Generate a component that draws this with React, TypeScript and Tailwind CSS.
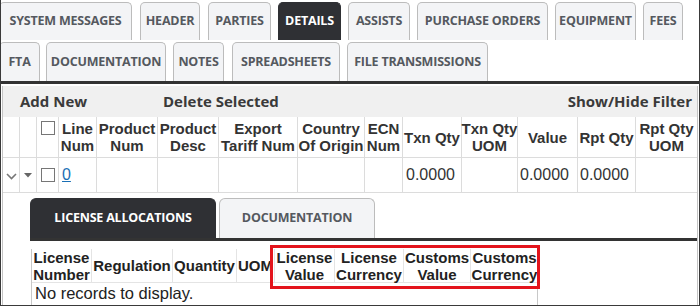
const tabBase =
  "h-full shrink-0 rounded-t-[5px] border border-b-0 flex items-center justify-center font-['Open_Sans',sans-serif] font-bold text-[12.5px] tracking-[-0.2px]";
const tabLight = 'border-[#bcbcbc] bg-[#f3f4f6] text-[#55595f]';
const tabDark = 'border-[#2f3034] bg-[#2f3034] text-white';

const rowOne = [
  { label: 'SYSTEM MESSAGES', cls: 'w-[133px] ml-[-2px]' },
  { label: 'HEADER', cls: 'w-[60px] ml-[8px]' },
  { label: 'PARTIES', cls: 'w-[63px] ml-[8px]' },
  { label: 'DETAILS', cls: 'w-[63px] ml-[7px]', active: true },
  { label: 'ASSISTS', cls: 'w-[62px] ml-[7px]' },
  { label: 'PURCHASE ORDERS', cls: 'w-[131px] ml-[7px]' },
  { label: 'EQUIPMENT', cls: 'w-[81px] ml-[7px]' },
  { label: 'FEES', cls: 'w-[40px] ml-[7px]' },
];

const rowTwo = [
  { label: 'FTA', cls: 'w-[41px] ml-[-2px]' },
  { label: 'DOCUMENTATION', cls: 'w-[120px] ml-[6px]' },
  { label: 'NOTES', cls: 'w-[51px] ml-[7px]' },
  { label: 'SPREADSHEETS', cls: 'w-[108px] ml-[8px]' },
  { label: 'FILE TRANSMISSIONS', cls: 'w-[141px] ml-[7px]' },
];

const headers: string[][] = [
  [],
  [],
  [],
  ['Line', 'Num'],
  ['Product', 'Num'],
  ['Product', 'Desc'],
  ['Export', 'Tariff Num'],
  ['Country', 'Of Origin'],
  ['ECN', 'Num'],
  ['Txn Qty'],
  ['Txn Qty', 'UOM'],
  ['Value'],
  ['Rpt Qty'],
  ['Rpt Qty', 'UOM'],
];

const gridCols =
  'grid grid-cols-[17px_17px_22px_38px_61px_61px_79px_67px_38px_59px_56px_60px_58px_61px]';

const subHeaders: { lines: string[]; cls: string }[] = [
  { lines: ['License', 'Number'], cls: 'w-[60px]' },
  { lines: ['Regulation'], cls: 'w-[81px]' },
  { lines: ['Quantity'], cls: 'w-[64px]' },
  { lines: ['UOM'], cls: 'w-[38px]' },
  { lines: ['License', 'Value'], cls: 'w-[60px]' },
  { lines: ['License', 'Currency'], cls: 'w-[69px]' },
  { lines: ['Customs', 'Value'], cls: 'w-[67px]' },
  { lines: ['Customs', 'Currency'], cls: 'w-[67px]' },
];

function Checkbox() {
  return <div className="w-[14px] h-[14px] border border-[#767676] bg-white" />;
}

export default function App() {
  return (
    <div className="w-[700px] h-[306px] overflow-hidden bg-white border-l border-r border-b border-[#3a3a3a] font-['Liberation_Sans',Arial,sans-serif] text-[#333]">
      <div className="flex h-[38px] mt-[2px]">
        {rowOne.map((t) => (
          <div key={t.label} className={`${tabBase} ${t.cls} ${t.active ? tabDark : tabLight}`}>
            {t.label}
          </div>
        ))}
      </div>
      <div className="flex h-[39px] mt-[2px]">
        {rowTwo.map((t) => (
          <div key={t.label} className={`${tabBase} ${t.cls} ${tabLight}`}>
            {t.label}
          </div>
        ))}
      </div>
      <div className="h-[3px] bg-[#333]" />

      <div className="mx-[1px] border-l border-r border-[#c4c4c4] h-[222px]">
        <div className="mt-[2px] h-[31px] bg-[#f0f0f0] flex items-center font-['Open_Sans',sans-serif] font-bold text-[15px] text-[#3a3a3a]">
          <span className="pl-[17px] w-[160px]">Add New</span>
          <span>Delete Selected</span>
          <span className="ml-auto pr-[5px]">Show/Hide Filter</span>
        </div>

        <div className={`${gridCols} h-[41px] border-b border-[#dcdcdc]`}>
          {headers.map((h, i) => (
            <div
              key={i}
              className={`border-r border-[#dcdcdc] flex flex-col items-center text-center font-bold text-[15px] leading-[17px] text-[#333] last:border-r-0 ${i === 2 ? 'justify-start pt-[4px]' : 'justify-center'}`}
            >
              {i === 2 ? <Checkbox /> : h.map((l) => <span key={l} className="whitespace-nowrap">{l}</span>)}
            </div>
          ))}
        </div>

        <div className={`${gridCols} h-[35px] border-b border-[#dcdcdc] text-[16px]`}>
          <div className="border-r border-[#dcdcdc] flex items-center justify-center">
            <svg width="11" height="7" viewBox="0 0 11 7" className="mt-[3px]">
              <polyline points="1,1 5.5,5.5 10,1" fill="none" stroke="#777" strokeWidth="1.6" />
            </svg>
          </div>
          <div className="border-r border-[#dcdcdc] flex items-center justify-center">
            <svg width="8" height="5" viewBox="0 0 8 5">
              <polygon points="0,0 8,0 4,4.5" fill="#666" />
            </svg>
          </div>
          <div className="border-r border-[#dcdcdc] flex items-center justify-center">
            <Checkbox />
          </div>
          <div className="border-r border-[#dcdcdc] flex items-center pl-[3px]">
            <span className="text-[#1a6fb5] underline">0</span>
          </div>
          <div className="border-r border-[#dcdcdc]" />
          <div className="border-r border-[#dcdcdc]" />
          <div className="border-r border-[#dcdcdc]" />
          <div className="border-r border-[#dcdcdc]" />
          <div className="border-r border-[#dcdcdc]" />
          <div className="border-r border-[#dcdcdc] flex items-center pl-[3px]">0.0000</div>
          <div className="border-r border-[#dcdcdc]" />
          <div className="border-r border-[#dcdcdc] flex items-center pl-[2px]">0.0000</div>
          <div className="border-r border-[#dcdcdc] flex items-center pl-[2px]">0.0000</div>
          <div />
        </div>

        <div className="flex mt-[5px] ml-[27px] h-[40px]">
          <div className={`${tabBase} ${tabDark} w-[186px] rounded-t-[6px] text-[12.5px]`}>LICENSE ALLOCATIONS</div>
          <div className={`${tabBase} ${tabLight} w-[156px] ml-[3px] rounded-t-[6px] text-[12.5px] text-[#666]`}>DOCUMENTATION</div>
        </div>
        <div className="ml-[27px] h-[3px] bg-[#333]" />

        <div className="relative ml-[28px] mt-[8px] w-[507px] border-l border-r border-[#c8c8c8] h-[60px]">
          <div className="flex h-[34px] border-b border-[#e4e4e4]">
            {subHeaders.map((h) => (
              <div
                key={h.lines.join(' ')}
                className={`${h.cls} shrink-0 border-r border-[#e4e4e4] flex flex-col items-center justify-center text-center font-bold text-[15px] leading-[17px] text-[#222] last:border-r-0`}
              >
                {h.lines.map((l) => (
                  <span key={l} className="whitespace-nowrap">{l}</span>
                ))}
              </div>
            ))}
          </div>
          <div className="pl-[3px] text-[16.5px] leading-[20px] text-[#222]">No records to display.</div>
          <div className="absolute left-[238px] top-[-4px] w-[270px] h-[44px] border-[3px] border-[#e3141c]" />
        </div>
      </div>
    </div>
  );
}
